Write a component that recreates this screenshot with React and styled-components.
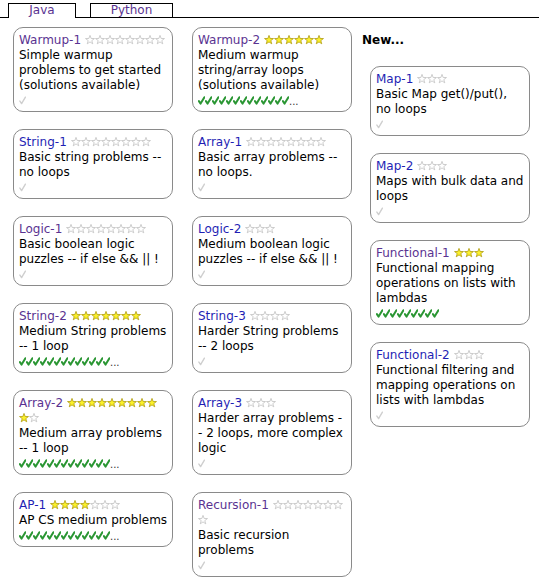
import React from "react";
import styled, { createGlobalStyle } from "styled-components";

const GlobalStyle = createGlobalStyle`
  body {
    margin: 0;
    background: #fff;
    color: #000;
    font-family: "DejaVu Sans", Verdana, sans-serif;
    font-size: 12px;
  }
`;

const PURPLE = "#5a3391";
const BLUE = "#1f1fb4";

// wrap = how many stars still fit on the title line
const left = [
  { name: "Warmup-1", seen: true, full: 0, empty: 8, lines: ["Simple warmup", "problems to get started", "(solutions available)"], checks: 0 },
  { name: "Warmup-2", seen: true, full: 6, empty: 0, lines: ["Medium warmup", "string/array loops", "(solutions available)"], checks: 13, more: true },
  { name: "String-1", full: 0, empty: 8, lines: ["Basic string problems --", "no loops"], checks: 0 },
  { name: "Array-1", full: 0, empty: 8, lines: ["Basic array problems --", "no loops."], checks: 0 },
  { name: "Logic-1", seen: true, full: 0, empty: 8, lines: ["Basic boolean logic", "puzzles -- if else && || !"], checks: 0 },
  { name: "Logic-2", full: 0, empty: 3, lines: ["Medium boolean logic", "puzzles -- if else && || !"], checks: 0 },
  { name: "String-2", seen: true, full: 7, empty: 0, lines: ["Medium String problems", "-- 1 loop"], checks: 13, more: true },
  { name: "String-3", full: 0, empty: 4, lines: ["Harder String problems", "-- 2 loops"], checks: 0 },
  { name: "Array-2", seen: true, full: 10, empty: 1, wrap: 9, lines: ["Medium array problems", "-- 1 loop"], checks: 13, more: true },
  { name: "Array-3", full: 0, empty: 3, lines: ["Harder array problems -", "- 2 loops, more complex", "logic"], checks: 0 },
  { name: "AP-1", full: 4, empty: 3, lines: ["AP CS medium problems"], checks: 13, more: true },
  { name: "Recursion-1", seen: true, full: 0, empty: 8, wrap: 7, lines: ["Basic recursion", "problems"], checks: 0 },
];

const added = [
  { name: "Map-1", full: 0, empty: 3, lines: ["Basic Map get()/put(),", "no loops"], checks: 0 },
  { name: "Map-2", full: 0, empty: 3, lines: ["Maps with bulk data and", "loops"], checks: 0 },
  { name: "Functional-1", seen: true, full: 3, empty: 0, lines: ["Functional mapping", "operations on lists with", "lambdas"], checks: 9 },
  { name: "Functional-2", full: 0, empty: 3, lines: ["Functional filtering and", "mapping operations on", "lists with lambdas"], checks: 0 },
];

const TabBar = styled.div`
  display: flex;
  align-items: flex-end;
  height: 17px;
  padding-left: 8px;
  border-bottom: 1px solid #000;
`;

const Tab = styled.div`
  box-sizing: border-box;
  width: ${(p) => p.$width}px;
  height: ${(p) => (p.$active ? 15 : 14)}px;
  margin-left: ${(p) => p.$gap || 0}px;
  margin-bottom: ${(p) => (p.$active ? -1 : 0)}px;
  border: 1px solid #000;
  border-bottom: none;
  background: #fff;
  color: ${PURPLE};
  text-align: center;
  line-height: 13px;
`;

const Main = styled.div`
  display: flex;
  align-items: flex-start;
  padding: 9px 0 0 13px;
`;

const Grid = styled.div`
  display: grid;
  grid-template-columns: 160px 160px;
  column-gap: 19px;
  row-gap: 17px;
  align-items: start;
`;

const Side = styled.div`
  display: flex;
  flex-direction: column;
  gap: 17px;
  margin-left: 10px;
  padding-top: 6px;
`;

const SideHead = styled.div`
  font-weight: bold;
  line-height: 15px;
  margin-bottom: 1px;
`;

const Card = styled.div`
  box-sizing: border-box;
  width: 160px;
  margin-left: ${(p) => p.$indent || 0}px;
  padding: 5px 5px 4px 5px;
  border: 1px solid #8a8a8a;
  border-radius: 10px;
  background: #fff;
`;

const Title = styled.div`
  line-height: 15px;
  white-space: nowrap;
`;

const Name = styled.a`
  color: ${(p) => (p.$seen ? PURPLE : BLUE)};
  text-decoration: none;
  margin-right: 4px;
`;

const Line = styled.div`
  line-height: 15px;
  white-space: nowrap;
`;

const Checks = styled.div`
  display: flex;
  align-items: center;
  height: 14px;
`;

const More = styled.span`
  font-size: 10px;
  color: #333;
  line-height: 10px;
  margin-top: 3px;
`;

const StarSvg = styled.svg`
  display: inline-block;
  width: 10px;
  height: 10px;
  vertical-align: -1px;
`;

const Star = ({ full }) => (
  <StarSvg viewBox="0 0 10 10">
    <polygon
      points="5,0.4 6.12,3.46 9.47,3.55 6.81,5.59 7.76,8.8 5,6.9 2.24,8.8 3.19,5.59 0.53,3.55 3.88,3.46"
      fill={full ? "#fbf12a" : "#fff"}
      stroke={full ? "#b09c10" : "#c2c2c2"}
      strokeWidth="0.8"
      strokeLinejoin="round"
    />
  </StarSvg>
);

const Tick = ({ faint }) => (
  <svg width="7" height="9" viewBox="0 0 7 9">
    <path
      d="M0.9 5.1 L2.6 7.6 L6.4 1.2"
      fill="none"
      stroke={faint ? "#cfcfcf" : "#2a9633"}
      strokeWidth={faint ? 1.4 : 2}
      strokeLinecap="round"
      strokeLinejoin="round"
    />
  </svg>
);

const Section = ({ item, indent }) => {
  const stars = [
    ...Array.from({ length: item.full }, () => true),
    ...Array.from({ length: item.empty }, () => false),
  ];
  return (
    <Card $indent={indent}>
      <Title>
        <Name href="#" $seen={item.seen}>{item.name}</Name>
        {stars.map((full, i) => (
          <React.Fragment key={i}>
            {item.wrap === i && <br />}
            <Star full={full} />
          </React.Fragment>
        ))}
      </Title>
      {item.lines.map((l) => <Line key={l}>{l}</Line>)}
      <Checks>
        {item.checks === 0 ? (
          <Tick faint />
        ) : (
          Array.from({ length: item.checks }, (_, i) => <Tick key={i} />)
        )}
        {item.more && <More>...</More>}
      </Checks>
    </Card>
  );
};

const App = () => {
  return (
    <>
      <GlobalStyle />
      <TabBar>
        <Tab $active $width={68}>Java</Tab>
        <Tab $width={83} $gap={14}>Python</Tab>
      </TabBar>
      <Main>
        <Grid>
          {left.map((s) => <Section key={s.name} item={s} />)}
        </Grid>
        <Side>
          <SideHead>New...</SideHead>
          {added.map((s) => <Section key={s.name} item={s} indent={8} />)}
        </Side>
      </Main>
    </>
  );
};

export default App;
